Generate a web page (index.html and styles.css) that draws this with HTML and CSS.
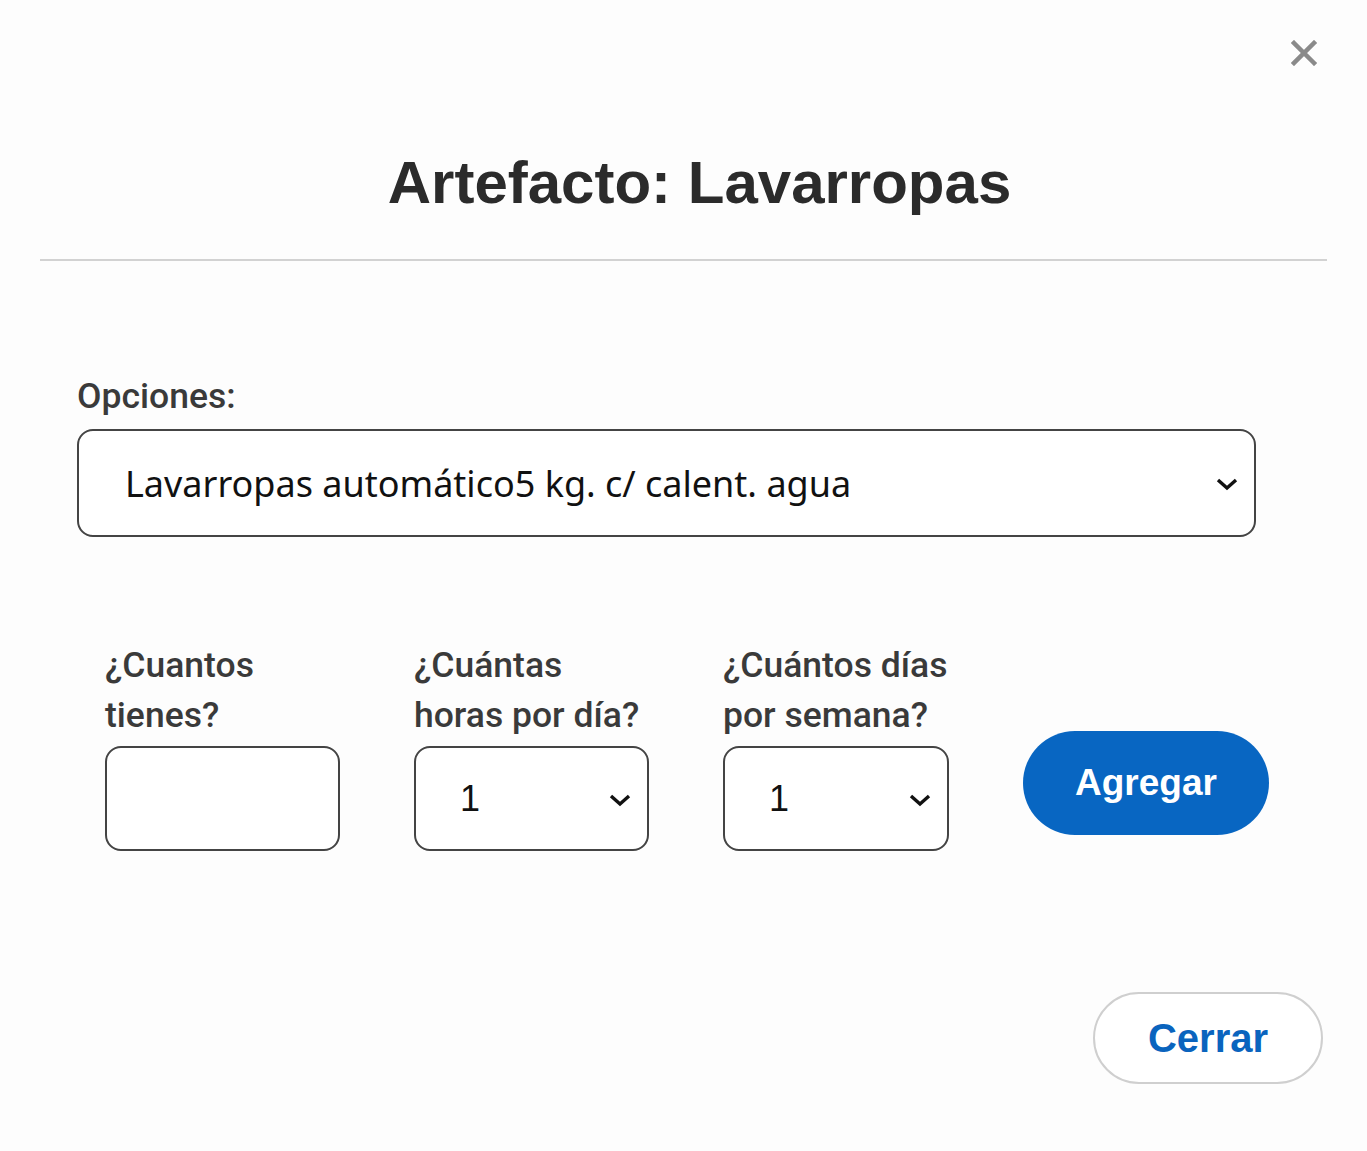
FILE: index.html
```html
<!DOCTYPE html>
<html lang="es">
<head>
<meta charset="UTF-8">
<meta name="viewport" content="width=device-width, initial-scale=1.0">
<title>Artefacto: Lavarropas</title>
<link rel="stylesheet" href="styles.css">
</head>
<body>
<div class="modal">
    <div class="modal-header">
        <h2 class="modal-title">Artefacto: Lavarropas</h2>
        <button class="close" type="button" aria-label="Cerrar">
            <svg width="26" height="26" viewBox="0 0 26 26"><path d="M3 3L23 23M23 3L3 23" stroke="#8a8a8a" stroke-width="4.5" stroke-linecap="square"/></svg>
        </button>
    </div>

    <div class="modal-body">
        <label class="label" for="opciones">Opciones:</label>
        <div class="select-wrap big">
            <select id="opciones" class="select">
                <option>Lavarropas automático5 kg. c/ calent. agua</option>
            </select>
            <svg class="chevron" width="24" height="14" viewBox="0 0 24 14"><path d="M3 3L12 11L21 3" fill="none" stroke="#111" stroke-width="3.4"/></svg>
        </div>

        <div class="row">
            <div class="field">
                <label class="label" for="cantidad">¿Cuantos tienes?</label>
                <input type="text" id="cantidad" class="box">
            </div>
            <div class="field">
                <label class="label" for="horas">¿Cuántas horas por día?</label>
                <div class="select-wrap">
                    <select id="horas" class="box select-small">
                        <option>1</option>
                    </select>
                    <svg class="chevron" width="24" height="14" viewBox="0 0 24 14"><path d="M3 3L12 11L21 3" fill="none" stroke="#111" stroke-width="3.4"/></svg>
                </div>
            </div>
            <div class="field narrow">
                <label class="label" for="dias">¿Cuántos días por semana?</label>
                <div class="select-wrap">
                    <select id="dias" class="box select-small">
                        <option>1</option>
                    </select>
                    <svg class="chevron" width="24" height="14" viewBox="0 0 24 14"><path d="M3 3L12 11L21 3" fill="none" stroke="#111" stroke-width="3.4"/></svg>
                </div>
            </div>
            <button class="btn-primary" type="button">Agregar</button>
        </div>
    </div>

    <div class="modal-footer">
        <button class="btn-outline" type="button">Cerrar</button>
    </div>
</div>
</body>
</html>
```

FILE: styles.css
```css
body {
    margin: 0;
    padding: 0;
    background-color: #fdfdfd;
    font-family: "Liberation Sans", Arial, sans-serif;
}

.modal {
    padding: 0 40px;
}

.modal-header {
    position: relative;
    padding-top: 147px;
    padding-bottom: 40px;
    border-bottom: 2px solid #d2d2d2;
}

.modal-title {
    margin: 0;
    padding-left: 32px;
    text-align: center;
    font-size: 60px;
    line-height: 72px;
    font-weight: bold;
    color: #2b2b2b;
}

.close {
    position: absolute;
    top: 40px;
    right: 10px;
    padding: 0;
    border: none;
    background: none;
    cursor: pointer;
}

.modal-body {
    padding: 110px 37px 0;
}

.label {
    display: block;
    font-family: Roboto, sans-serif;
    font-weight: 500;
    font-size: 35.5px;
    line-height: 50px;
    color: #3a3a3a;
}

.select-wrap {
    position: relative;
}

.select-wrap.big {
    width: 1179px;
    margin-top: 8px;
}

.select {
    width: 100%;
    height: 108px;
    padding: 0 70px 0 46px;
    border: 2px solid #444;
    border-radius: 16px;
    background: #fff;
    appearance: none;
    font-family: "Noto Sans", sans-serif;
    font-size: 36px;
    color: #111;
}

.chevron {
    position: absolute;
    top: 50%;
    right: 17px;
    margin-top: -6px;
    pointer-events: none;
}

.row {
    display: flex;
    gap: 74px;
    margin-top: 103px;
    padding-left: 28px;
}

.field {
    width: 235px;
}

.field.narrow {
    width: 226px;
}

.field .label {
    margin-bottom: 6px;
}

.box {
    display: block;
    width: 100%;
    height: 105px;
    box-sizing: border-box;
    border: 2px solid #444;
    border-radius: 16px;
    background: #fff;
}

.select-small {
    appearance: none;
    padding: 0 0 0 44px;
    font-family: "Liberation Sans", Arial, sans-serif;
    font-size: 36px;
    color: #111;
}

.btn-primary {
    align-self: flex-end;
    width: 246px;
    height: 104px;
    margin-bottom: 16px;
    border: none;
    border-radius: 52px;
    background-color: #0866c2;
    color: #fff;
    font-family: "Liberation Sans", Arial, sans-serif;
    font-weight: bold;
    font-size: 37px;
    cursor: pointer;
}

.modal-footer {
    display: flex;
    justify-content: flex-end;
    padding: 141px 4px 0;
}

.btn-outline {
    width: 230px;
    height: 92px;
    border: 2px solid #cfcfcf;
    border-radius: 46px;
    background: #fff;
    color: #0a64be;
    font-family: "Liberation Sans", Arial, sans-serif;
    font-weight: bold;
    font-size: 40px;
    cursor: pointer;
}
```
